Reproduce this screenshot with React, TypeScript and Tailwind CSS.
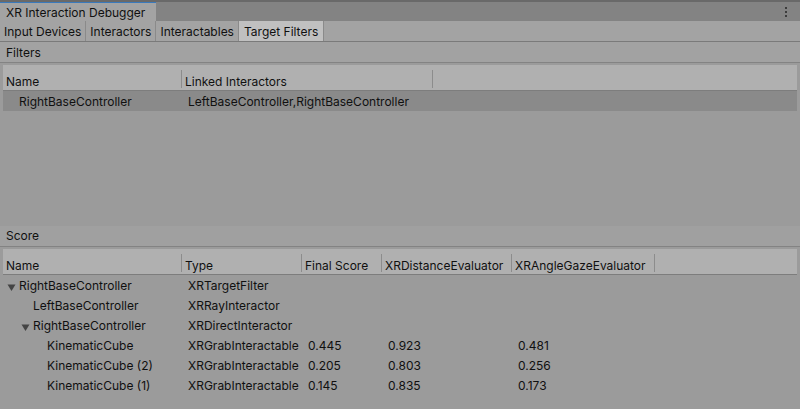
import React from "react"

const filterCols = [
  { label: "Name", w: 179 },
  { label: "Linked Interactors", w: 251 },
]

const scoreCols = [
  { label: "Name", w: 179 },
  { label: "Type", w: 120 },
  { label: "Final Score", w: 80 },
  { label: "XRDistanceEvaluator", w: 130 },
  { label: "XRAngleGazeEvaluator", w: 143 },
]

type Row = {
  name: string
  depth: number
  expanded?: boolean
  type: string
  score?: string
  dist?: string
  gaze?: string
}

const rows: Row[] = [
  { name: "RightBaseController", depth: 0, expanded: true, type: "XRTargetFilter" },
  { name: "LeftBaseController", depth: 1, type: "XRRayInteractor" },
  { name: "RightBaseController", depth: 1, expanded: true, type: "XRDirectInteractor" },
  { name: "KinematicCube", depth: 2, type: "XRGrabInteractable", score: "0.445", dist: "0.923", gaze: "0.481" },
  { name: "KinematicCube (2)", depth: 2, type: "XRGrabInteractable", score: "0.205", dist: "0.803", gaze: "0.256" },
  { name: "KinematicCube (1)", depth: 2, type: "XRGrabInteractable", score: "0.145", dist: "0.835", gaze: "0.173" },
]

const tabs = ["Input Devices", "Interactors", "Interactables", "Target Filters"]

function HeaderRow({ cols }: { cols: { label: string; w: number }[] }) {
  return (
    <div className="flex h-[26px] bg-[#b0b0b0] border-b border-[#7d7d7d]">
      {cols.map((c) => (
        <div key={c.label} style={{ width: c.w }} className="flex h-full shrink-0 items-end">
          <span className="flex-1 truncate pl-[3px] leading-[18px] translate-y-[1px]">{c.label}</span>
          <div className="mb-[2px] h-[18px] w-px self-end bg-[#8c8c8c]" />
        </div>
      ))}
    </div>
  )
}

function Arrow() {
  return (
    <svg width="9" height="9" viewBox="0 0 9 9" className="mr-[3px] mt-[2px]">
      <path d="M0.5 1.5 L8.5 1.5 L4.5 8 Z" fill="#444444" />
    </svg>
  )
}

export default function App() {
  return (
    <div
      className="flex h-[409px] w-[800px] flex-col overflow-hidden bg-[#9b9b9b] text-[12px] text-[#101010]"
      style={{ fontFamily: "Inter, 'Noto Sans', sans-serif" }}
    >
      {/* window title bar */}
      <div className="flex h-[21px] shrink-0 items-stretch border-t-2 border-[#696969] bg-[#838383]">
        <div className="flex w-[156px] items-center border-t border-[#3a79bb] bg-[#a3a3a3] pl-[6px] pt-[2px]">
          XR Interaction Debugger
        </div>
        <div className="flex-1" />
        <div className="flex w-[26px] flex-col items-center justify-center gap-[2px] pr-[2px]">
          <div className="h-[2px] w-[2px] bg-[#3c3c3c]" />
          <div className="h-[2px] w-[2px] bg-[#3c3c3c]" />
          <div className="h-[2px] w-[2px] bg-[#3c3c3c]" />
        </div>
      </div>

      {/* toolbar tabs */}
      <div className="flex h-[21px] shrink-0 border-b border-[#7a7a7a] bg-[#a3a3a3]">
        {tabs.map((t) => (
          <div
            key={t}
            className={
              "flex items-center border-r border-[#8a8a8a] pt-[1px] " +
              (t === "Target Filters" ? "bg-[#c0c0c0] px-[5px]" : "px-[4px]")
            }
          >
            {t}
          </div>
        ))}
      </div>

      {/* Filters */}
      <div className="flex h-[21px] shrink-0 items-center border-b border-[#838383] bg-[#a2a2a2] pl-[6px] pt-[1px]">
        Filters
      </div>
      <div className="h-[163px] shrink-0 px-[3px] pt-[2px]">
        <HeaderRow cols={filterCols} />
        <div className="flex h-[20px] items-center bg-[#8a8a8a] pt-[2px]">
          <div className="w-[179px] shrink-0 pl-[16px]">RightBaseController</div>
          <div className="pl-[6px]">LeftBaseController,RightBaseController</div>
        </div>
      </div>

      {/* Score */}
      <div className="flex h-[21px] shrink-0 items-center border-b border-[#838383] bg-[#a0a0a0] pl-[6px]">
        Score
      </div>
      <div className="flex-1 px-[3px] pt-[2px]">
        <HeaderRow cols={scoreCols} />
        <div className="pt-[1px]">
          {rows.map((r, i) => (
            <div key={i} className="flex h-[20px] items-center">
              <div className="flex w-[179px] shrink-0 items-center" style={{ paddingLeft: 4 + r.depth * 14 }}>
                {r.expanded ? <Arrow /> : <div className="w-[12px]" />}
                <span>{r.name}</span>
              </div>
              <div className="w-[120px] shrink-0 pl-[6px]">{r.type}</div>
              <div className="w-[80px] shrink-0 pl-[6px]">{r.score}</div>
              <div className="w-[130px] shrink-0 pl-[6px]">{r.dist}</div>
              <div className="w-[143px] shrink-0 pl-[6px]">{r.gaze}</div>
            </div>
          ))}
        </div>
      </div>
    </div>
  )
}
